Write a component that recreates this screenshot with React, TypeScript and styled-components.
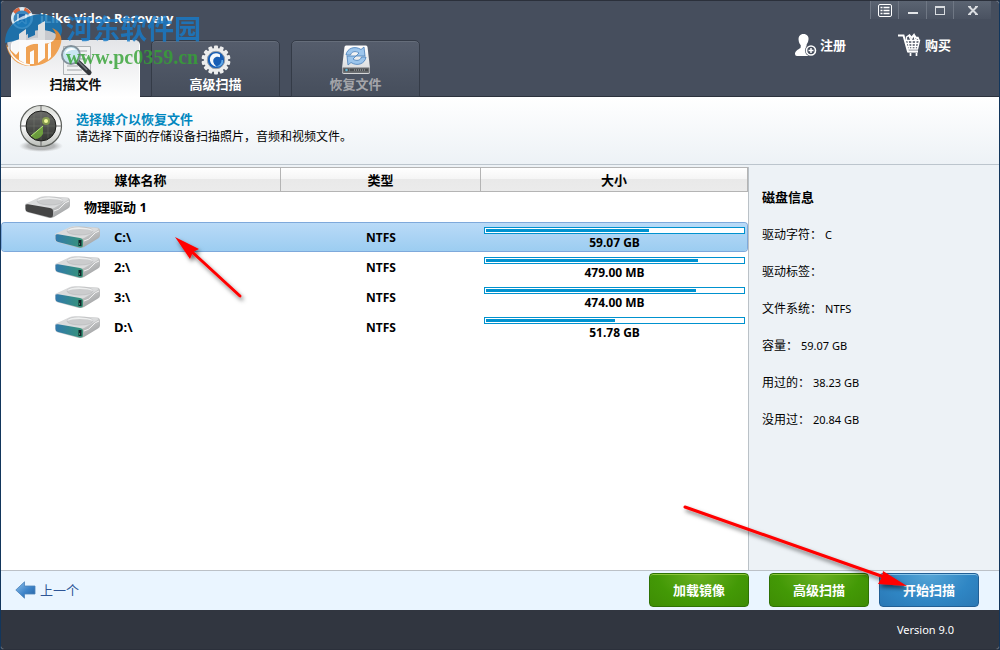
import React from "react";
import styled, { createGlobalStyle, css } from "styled-components";

const GlobalStyle = createGlobalStyle`
  * { box-sizing: border-box; }
  body {
    margin: 0;
    font-family: "Noto Sans", "Noto Sans CJK SC", sans-serif;
    font-size: 12px;
    line-height: 16px;
    color: #000;
    background: #1b2f47;
  }
  button { font: inherit; border: 0; background: none; padding: 0; cursor: pointer; }
  svg { display: block; flex: none; }
`;

const Window = styled.div`
  position: relative;
  min-height: 100vh;
  display: flex;
  flex-direction: column;
  border: 1px solid #2b303b;
  border-left-color: #12365c;
  border-right-color: #12365c;
  border-radius: 4px;
  overflow: hidden;
  background: #fff;
`;

const Header = styled.header`
  display: flex;
  justify-content: space-between;
  height: 96px;
  background: #464e5d;
  border-bottom: 1px solid #2c323d;
`;

const HeaderLeft = styled.div`
  display: flex;
  flex-direction: column;
  justify-content: space-between;
`;

const TitleRow = styled.div`
  display: flex;
  align-items: center;
  gap: 6px;
  padding: 5px 0 0 9px;
`;

const Title = styled.h1`
  margin: 0;
  font-size: 13px;
  line-height: 16px;
  font-weight: 700;
  color: #fff;
`;

const Tabs = styled.nav`
  display: flex;
  gap: 11px;
  padding-left: 10px;
  margin-bottom: -1px;
`;

const Tab = styled.button<{ $state: "active" | "normal" | "disabled" }>`
  display: flex;
  flex-direction: column;
  align-items: center;
  width: 129px;
  height: 57px;
  padding-top: 3px;
  font-size: 13px;
  line-height: 16px;
  font-weight: 700;
  border: 1px solid #343b47;
  border-radius: 5px 5px 0 0;
  color: #fff;
  background: linear-gradient(#555d6c, #464e5c);
  box-shadow: inset 0 1px 0 #656d7a;
  ${(p) =>
    p.$state === "active" &&
    css`
      color: #111;
      border-color: #e4e6e9 #fff transparent;
      border-bottom: 0;
      background: linear-gradient(#e4e5e8, #fff);
      box-shadow: none;
    `}
  ${(p) => p.$state === "disabled" && css`color: #a5a6aa;`}
`;

const HeaderRight = styled.div`
  display: flex;
  flex-direction: column;
  align-items: flex-end;
  padding-right: 8px;
`;

const Caption = styled.div`
  display: flex;
`;

const CaptionButton = styled.button<{ $w: number }>`
  display: flex;
  align-items: center;
  justify-content: center;
  width: ${(p) => p.$w}px;
  height: 18px;
  border-left: 1px solid #6f7784;
  background: linear-gradient(#5b6472, #4a5261);
`;

const HeaderLinks = styled.div`
  display: flex;
  gap: 52px;
  padding: 14px 40px 0 0;
`;

const HeaderLink = styled.a`
  display: flex;
  align-items: center;
  gap: 3px;
  color: #fff;
  font-weight: 700;
  font-size: 13px;
  line-height: 24px;
  text-decoration: none;
`;

const Intro = styled.section`
  display: flex;
  gap: 10px;
  height: 68px;
  padding: 4px 0 0 15px;
  background: linear-gradient(#fff, #edf2f6);
  border-bottom: 1px solid #bcc5cd;
`;

const IntroText = styled.div`
  padding-top: 9px;
`;

const IntroTitle = styled.h2`
  margin: 0;
  font-size: 13px;
  line-height: 18px;
  font-weight: 700;
  color: #0087bf;
`;

const IntroBody = styled.p`
  margin: 0;
  line-height: 18px;
`;

const Main = styled.main`
  flex: 1;
  display: flex;
  background: #edf2f6;
`;

const ListPane = styled.div`
  flex: 1;
  min-width: 0;
  margin-top: 2px;
  background: #fff;
  border-right: 1px solid #bac1c7;
`;

const MediaTable = styled.table`
  width: 100%;
  table-layout: fixed;
  border-collapse: separate;
  border-spacing: 0;
  font-weight: 700;
`;

const HeadCell = styled.th<{ $w?: string }>`
  width: ${(p) => p.$w || "auto"};
  height: 25px;
  padding: 0;
  font-size: 13px;
  line-height: 18px;
  border: solid #b4b4b4;
  border-width: 1px 1px 1px 0;
  background: linear-gradient(#fff 0%, #f5f5f5 48%, #e9e9e9 50%, #ebebeb 100%);
`;

const Row = styled.tr<{ $selected?: boolean }>`
  td {
    height: 30px;
    padding: 2px 0 0;
    text-align: center;
    border: solid transparent;
    border-width: 1px 0;
  }
  td:first-child { padding: 0; border-left-width: 1px; border-radius: 4px 0 0 4px; }
  td:last-child { border-right-width: 1px; border-radius: 0 4px 4px 0; }
  ${(p) =>
    p.$selected &&
    css`
      td {
        background: linear-gradient(#b9daf7, #9ccdf1);
        background-clip: padding-box;
        border-color: #7ea9db;
      }
    `}
`;

const DriveName = styled.div<{ $depth: number }>`
  display: flex;
  align-items: center;
  gap: 13px;
  padding-left: ${(p) => 21 + p.$depth * 30}px;
  font-size: 13px;
  line-height: 18px;
`;

const SizeBox = styled.div`
  padding: 2px 2px 0 3px;
`;

const Meter = styled.div`
  height: 7px;
  padding: 1px;
  border: 1px solid #0092cf;
  background: #fff;
`;

const MeterFill = styled.div`
  height: 3px;
  background: #0092cf;
`;

const SizeText = styled.div`
  line-height: 16px;
  margin-top: 1px;
  height: 16px;
`;

const InfoPane = styled.aside`
  width: 250px;
  padding: 23px 0 0 13px;
`;

const InfoTitle = styled.h2`
  margin: 0 0 20px;
  font-size: 13px;
  line-height: 18px;
`;

const InfoList = styled.dl`
  margin: 0;
  display: flex;
  flex-direction: column;
  gap: 19px;
`;

const InfoItem = styled.div`
  display: flex;
  line-height: 18px;
  gap: 3px;
  dd { margin: 0; font-size: 11px; }
`;

const ActionBar = styled.div`
  display: flex;
  align-items: center;
  height: 40px;
  padding: 0 20px 2px 14px;
  background: #eaf5ff;
  border-top: 1px solid #bcc1c7;
`;

const BackButton = styled.button`
  display: flex;
  align-items: center;
  gap: 4px;
  margin-right: auto;
  font-size: 13px;
  line-height: 18px;
  color: #2e5596;
`;

const ActionButton = styled.button<{ $blue?: boolean; $gap?: number }>`
  width: 100px;
  height: 34px;
  margin-left: ${(p) => p.$gap || 0}px;
  font-size: 13px;
  font-weight: 700;
  color: #fff;
  border: 1px solid ${(p) => (p.$blue ? "#215f95" : "#2f7204")};
  border-radius: 4px;
  background: ${(p) =>
    p.$blue
      ? "radial-gradient(ellipse at 50% 0, #55a5d6, #2f86c4 60%, #2a78b5)"
      : "radial-gradient(ellipse at 50% 0, #6bb023, #439906 60%, #3e8d04)"};
  box-shadow: inset 0 1px 0 ${(p) => (p.$blue ? "#86c3e8" : "#8cc63a")};
`;

const Footer = styled.footer`
  height: 39px;
  padding-right: 45px;
  text-align: right;
  font-size: 11px;
  line-height: 40px;
  color: #fff;
  background: #313640;
`;

const Watermark = styled.div`
  position: absolute;
  left: 3px;
  top: 10px;
  display: flex;
  gap: 2px;
  opacity: 0.82;
  pointer-events: none;
`;

const WatermarkText = styled.div`
  font-family: "Liberation Serif", "Noto Sans CJK SC", serif;
  font-weight: 700;
  padding-top: 3px;
`;

const WatermarkName = styled.div`
  font-size: 27px;
  line-height: 32px;
  color: #177bc9;
`;

const WatermarkUrl = styled.div`
  font-size: 20px;
  line-height: 22px;
  color: #36a336;
`;

const Pointer = styled.svg<{ $right?: boolean }>`
  position: absolute;
  pointer-events: none;
  ${(p) => (p.$right ? "right: 85px; bottom: 54px;" : "left: 169px; top: 230px;")}
`;

const AppLogo = () => (
  <svg width="24" height="24" viewBox="0 0 24 24">
    <circle cx="12" cy="12" r="11" fill="#dceaf3" />
    <path d="M3 5.500A11 11 0 0 1 9 1.500l2 5a6 6 0 0 0-4 3zM15 1.500a11 11 0 0 1 6 5l-5 3a6 6 0 0 0-3-3z" fill="#d8663f" />
    <circle cx="12" cy="13" r="8.500" fill="#3c87be" />
    <path d="M8 8h8v9H8z" fill="#1c5fa4" />
    <path d="M8 8v10M16 8v10M8 18l4-3 4 3" stroke="#b9dbf1" strokeWidth="1.500" fill="none" />
  </svg>
);

const ScanFileIcon = () => (
  <svg width="32" height="32" viewBox="0 0 32 32">
    <path d="M3.500 2.500h27v28h-27z" fill="#f1f2f3" stroke="#aeb2b5" />
    <path d="M18 7h9M19 11h8M19 15h8M7 22h11M7 26h15" stroke="#c9cbcd" strokeWidth="2" />
    <path d="M18.500 18.500l10.500 10" stroke="#33373c" strokeWidth="5" strokeLinecap="round" />
    <path d="M18 17l9 9" stroke="#787d82" strokeWidth="1.500" />
    <circle cx="11" cy="11" r="9" fill="#c9e6f2" stroke="#82919b" strokeWidth="2" />
    <path d="M5 10a6.500 6.500 0 0 1 11-4q-6-1-11 4z" fill="#fff" />
  </svg>
);

const GearIcon = () => (
  <svg width="32" height="32" viewBox="0 0 32 32">
    <g fill="#eceded">
      {Array.from({ length: 14 }, (_, i) => (
        <rect key={i} x="14" y="1.500" width="4" height="7" rx="1" transform={`rotate(${(i * 360) / 14} 16 16)`} />
      ))}
      <circle cx="16" cy="16" r="12" />
    </g>
    <circle cx="16" cy="16" r="8.700" fill="#175eb5" stroke="#9ca2a8" />
    <path d="M20 10.500c-5-3.500-11 .5-10 6 .5 3.500 3.500 6 6.500 6-4-3-4.500-8-.5-9.500 1.500-.6 3-.3 4 .3z" fill="#f4f9fd" />
    <path d="M21.500 16c0 4-3 6.500-6.500 6 5 2 9-1.500 8-6z" fill="#5ea7e5" />
  </svg>
);

const RecoverIcon = () => (
  <svg width="32" height="32" viewBox="0 0 32 32">
    <defs>
      <linearGradient id="driveFace" x1="0" y1="0" x2="0" y2="1">
        <stop offset="0" stopColor="#fff" />
        <stop offset="1" stopColor="#d4d6d8" />
      </linearGradient>
    </defs>
    <path d="M4.500 3Q4.700 1.500 6 1.500h20Q27.300 1.500 27.500 3L30 24v4q0 2-2 2H4q-2 0-2-2v-4z" fill="url(#driveFace)" />
    <path d="M2.500 23.500h27v4q0 1.500-1.500 1.500H4Q2.500 29 2.500 27.500z" fill="#6c6f72" />
    <path d="M4 26h5M10 26h18" stroke="#4a4d50" strokeWidth="2.500" />
    <path d="M14 26h12" stroke="#8f9396" strokeWidth="1.500" strokeDasharray="1 1" />
    <circle cx="6.500" cy="26" r="1.300" fill="#60b5d4" />
    <g fill="#9cc5ec" stroke="#477eb8" strokeWidth="0.800" strokeLinejoin="round">
      <path d="M6 11c1-7 9-9.500 15-5.500l3-2.500 1 9h-9l3-3C15.500 6.500 11.500 7.500 10.500 11z" />
      <path d="M26 13c-1 7-9 9.500-15 5.500L8 21l-1-9h9l-3 3c3.500 2.500 7.500 1.500 8.500-2z" />
    </g>
  </svg>
);

const ListIcon = () => (
  <svg width="14" height="13" viewBox="0 0 14 13">
    <rect x="0.500" y="0.500" width="13" height="12" rx="1.500" fill="none" stroke="#fff" />
    <path d="M2.500 3.500h2M2.500 6.500h2M2.500 9.500h2M5.500 3.500h6M5.500 6.500h6M5.500 9.500h6" stroke="#fff" strokeWidth="1.500" />
  </svg>
);

const MinimizeIcon = () => (
  <svg width="10" height="10" viewBox="0 0 10 10"><path d="M0 8h10" stroke="#e3e5e8" strokeWidth="2" /></svg>
);

const MaximizeIcon = () => (
  <svg width="10" height="9" viewBox="0 0 10 9">
    <path d="M0 0h10v9H0zM1 2v6h8V2z" fill="#d9dce0" fillRule="evenodd" />
  </svg>
);

const CloseIcon = () => (
  <svg width="10" height="9" viewBox="0 0 10 9">
    <path d="M1 .5l8 8M9 .5l-8 8" stroke="#d9dce0" strokeWidth="2" />
    <path d="M0 .5h3M7 .5h3M0 8.500h3M7 8.500h3" stroke="#d9dce0" />
  </svg>
);

const UserAddIcon = () => (
  <svg width="23" height="24" viewBox="0 0 23 24">
    <path d="M9.500 1c3.500 0 5.500 2.500 5 5.500-.2 2.500-1.500 4-2 5.500l.3 2.500 2 1.500v7H3q-2 0-2-2c0-3 3-4.500 5.500-6l.3-2.500c-1-1.500-2-3-2.200-5.500C4.300 3.500 6 1 9.500 1z" fill="#fff" />
    <circle cx="17" cy="17.500" r="6" fill="#464e5d" />
    <circle cx="17" cy="17.500" r="4.500" fill="none" stroke="#fff" strokeWidth="1.600" />
    <path d="M14.500 17.500h5M17 15v5" stroke="#fff" strokeWidth="1.500" />
  </svg>
);

const CartIcon = () => (
  <svg width="24" height="24" viewBox="0 0 24 24" fill="none" stroke="#fff">
    <path d="M0 2.500h5.500L10 18.500h10" strokeWidth="2" />
    <path d="M6.500 7.500h15l-2 8.500H9M7 10.500h14M8 13.500h12M10 7.500l1.500 8.500M14 7v9M18 7l-1 9" strokeWidth="1.400" />
    <path d="M8.500 7V4l3-2 2 2.500 2.500-3 2 3h2L21 7M11 3l2 4 3-5 1 5 3-2" strokeWidth="1.400" />
    <path d="M10 18.500h10M12.500 20v3M18.500 20v3" strokeWidth="1.700" />
  </svg>
);

const RadarIcon = () => (
  <svg width="50" height="52" viewBox="0 0 50 52">
    <defs>
      <radialGradient id="radarShade"><stop offset=".6" stopColor="#777" stopOpacity=".5" /><stop offset="1" stopColor="#999" stopOpacity="0" /></radialGradient>
      <linearGradient id="radarRing" x1="0" y1="0" x2="0" y2="1"><stop offset="0" stopColor="#d7d9d4" /><stop offset=".5" stopColor="#fff" /><stop offset="1" stopColor="#b9bcb7" /></linearGradient>
      <linearGradient id="radarFace" x1="0" y1="0" x2="0" y2="1"><stop offset="0" stopColor="#6b6c69" /><stop offset="1" stopColor="#333532" /></linearGradient>
    </defs>
    <ellipse cx="25" cy="45" rx="22" ry="6" fill="url(#radarShade)" />
    <circle cx="25" cy="25" r="20.500" fill="url(#radarRing)" stroke="#5d605c" strokeWidth="1.200" />
    <circle cx="25" cy="25" r="15" fill="url(#radarFace)" stroke="#1c1d1b" />
    <path d="M25 4v6M25 40v6M4 25h6M40 25h6" stroke="#666" />
    <path d="M25 11v28M11 25h28M18 13v24M32 13v24M13 18h24M13 32h24" stroke="#8a8d84" strokeOpacity=".45" strokeWidth=".7" />
    <path d="M15 35L27 25v8q-3 5-8 5z" fill="#78b83b" fillOpacity=".75" />
    <path d="M15 35L27 25" stroke="#b5e878" />
    <circle cx="30" cy="20" r="4" fill="#9fc04a" fillOpacity=".6" />
    <circle cx="30" cy="20" r="2" fill="#f3f999" />
  </svg>
);

const DriveIcon = ({ dark }: { dark?: boolean }) => (
  <svg width="48" height="26" viewBox="0 0 48 26">
    <defs>
      <linearGradient id="driveTop" x1="0" y1="0" x2="1" y2="1"><stop offset="0" stopColor="#e2e3e3" /><stop offset=".5" stopColor="#c9cacb" /><stop offset="1" stopColor="#929495" /></linearGradient>
      <linearGradient id="driveFront"><stop offset="0" stopColor="#3179ac" /><stop offset="1" stopColor="#389577" /></linearGradient>
    </defs>
    <path d="M2 10L17 3q2-1 5-.8L44 3.500q3 .3 3 3v5q0 2-2 3L31 23q-2 1.300-5 1L5 18.500q-3-.8-3-3.500z" fill="url(#driveTop)" />
    <path d="M3 10L18 3.500q2-1 5-.8l20 1.200q4 .3 1 2.500L31 14q-2 1-5 .7z" fill="#dadbdc" />
    <ellipse cx="27" cy="7" rx="13" ry="4" fill="#cbcccd" stroke="#b5b7b8" strokeWidth=".6" />
    <path d="M14 7q2-4 14-3.600Q40 4 40 7q-4-2-13-2t-13 2z" fill="#eeefef" />
    <path d="M31 17q5-1 8-5t7-5" stroke="#f2f2f2" fill="none" />
    <path d="M2.500 11Q3 10 5 10.300L27 14q3 .5 3 3v4q0 3-3 2.500L5 18q-2.500-.7-2.500-3z" fill={dark ? "#454545" : "url(#driveFront)"} />
    {!dark && <path d="M25.500 16h3v6h-3z" fill="#122328" />}
    {!dark && <path d="M26 20h1" stroke="#64e59b" />}
  </svg>
);

const BackIcon = () => (
  <svg width="21" height="18" viewBox="0 0 21 18">
    <defs>
      <linearGradient id="backFill" x1="0" y1="0" x2="1" y2="1"><stop offset="0" stopColor="#91c3ec" /><stop offset=".55" stopColor="#3e84c9" /><stop offset="1" stopColor="#245f9e" /></linearGradient>
    </defs>
    <path d="M.8 9L9.500.8V5H20v8H9.500v4.200z" fill="url(#backFill)" stroke="#4d83ba" strokeWidth=".8" />
  </svg>
);

const SiteLogo = () => (
  <svg width="60" height="58" viewBox="0 0 60 58">
    <circle cx="29" cy="29" r="26" fill="#fff" fillOpacity=".85" />
    <path d="M1 32C1 19 8 10 20 8c10-6 24-7 34 1 5 5 5 12 2 17-7-6-13-7-20-7-12 0-18 11-31 12z" fill="#1678ba" />
    <path d="M2 33c2 14 12 22 24 22 14 0 27-7 31-23 2-7-3-13-9-15 4 4 5 9 2 12-5 6-16 2-25 4-5 1-10 7-13 11-4-3-7-7-10-11z" fill="#f19232" />
    <path d="M4 36c3 10 11 17 22 18" fill="none" stroke="#fff" strokeWidth="1.500" />
    <g fill="#fff">
      <path d="M15 23l7-5v35l-7-4zM34 14l7-4v37l-7 5z" />
      <path d="M21 31q8-5 14-4v6q-7-1-14 4z" />
      <path d="M26 41l4-2v14h-4zM44 33l3-2v15l-3 3z" />
    </g>
    <path d="M24 16l7-4v12l-7 3z" fill="#1678ba" />
  </svg>
);

const Shadow = ({ id }: { id: string }) => (
  <filter id={id} x="-20%" y="-20%" width="150%" height="150%">
    <feDropShadow dx="2" dy="3" stdDeviation="2" floodColor="#000" floodOpacity=".55" />
  </filter>
);

const drives = [
  { name: "C:\\", type: "NTFS", size: "59.07 GB", used: 63.5, selected: true },
  { name: "2:\\", type: "NTFS", size: "479.00 MB", used: 82.5 },
  { name: "3:\\", type: "NTFS", size: "474.00 MB", used: 81.7 },
  { name: "D:\\", type: "NTFS", size: "51.78 GB", used: 50.2 },
];

const info = [
  ["驱动字符：", "C"],
  ["驱动标签：", ""],
  ["文件系统：", "NTFS"],
  ["容量：", "59.07 GB"],
  ["用过的：", "38.23 GB"],
  ["没用过：", "20.84 GB"],
];

export default function App() {
  return (
    <>
      <GlobalStyle />
      <Window>
        <Header>
          <HeaderLeft>
            <TitleRow>
              <AppLogo />
              <Title>iLike Video Recovery</Title>
            </TitleRow>
            <Tabs>
              <Tab $state="active"><ScanFileIcon />扫描文件</Tab>
              <Tab $state="normal"><GearIcon />高级扫描</Tab>
              <Tab $state="disabled"><RecoverIcon />恢复文件</Tab>
            </Tabs>
          </HeaderLeft>
          <HeaderRight>
            <Caption>
              <CaptionButton $w={28} aria-label="菜单"><ListIcon /></CaptionButton>
              <CaptionButton $w={28} aria-label="最小化"><MinimizeIcon /></CaptionButton>
              <CaptionButton $w={27} aria-label="最大化"><MaximizeIcon /></CaptionButton>
              <CaptionButton $w={38} aria-label="关闭"><CloseIcon /></CaptionButton>
            </Caption>
            <HeaderLinks>
              <HeaderLink href="#register"><UserAddIcon />注册</HeaderLink>
              <HeaderLink href="#buy"><CartIcon />购买</HeaderLink>
            </HeaderLinks>
          </HeaderRight>
        </Header>

        <Intro>
          <RadarIcon />
          <IntroText>
            <IntroTitle>选择媒介以恢复文件</IntroTitle>
            <IntroBody>请选择下面的存储设备扫描照片，音频和视频文件。</IntroBody>
          </IntroText>
        </Intro>

        <Main>
          <ListPane>
            <MediaTable>
              <thead>
                <tr>
                  <HeadCell $w="280px">媒体名称</HeadCell>
                  <HeadCell $w="200px">类型</HeadCell>
                  <HeadCell>大小</HeadCell>
                </tr>
              </thead>
              <tbody>
                <Row>
                  <td><DriveName $depth={0}><DriveIcon dark />物理驱动 1</DriveName></td>
                  <td />
                  <td />
                </Row>
                {drives.map((d) => (
                  <Row key={d.name} $selected={d.selected}>
                    <td><DriveName $depth={1}><DriveIcon />{d.name}</DriveName></td>
                    <td>{d.type}</td>
                    <td>
                      <SizeBox>
                        <Meter><MeterFill style={{ width: `${d.used}%` }} /></Meter>
                        <SizeText>{d.size}</SizeText>
                      </SizeBox>
                    </td>
                  </Row>
                ))}
              </tbody>
            </MediaTable>
          </ListPane>
          <InfoPane>
            <InfoTitle>磁盘信息</InfoTitle>
            <InfoList>
              {info.map(([label, value]) => (
                <InfoItem key={label}><dt>{label}</dt><dd>{value}</dd></InfoItem>
              ))}
            </InfoList>
          </InfoPane>
        </Main>

        <ActionBar>
          <BackButton><BackIcon />上一个</BackButton>
          <ActionButton>加载镜像</ActionButton>
          <ActionButton $gap={20}>高级扫描</ActionButton>
          <ActionButton $blue $gap={10}>开始扫描</ActionButton>
        </ActionBar>
        <Footer>Version 9.0</Footer>

        <Pointer width="80" height="76" viewBox="0 0 80 76">
          <defs><Shadow id="shadowA" /></defs>
          <g filter="url(#shadowA)" fill="#f00">
            <path d="M20 19L70 65" stroke="#f00" strokeWidth="3" strokeLinecap="round" />
            <path d="M5 6L29 18 23 21 20 28z" />
          </g>
        </Pointer>
        <Pointer $right width="240" height="100" viewBox="0 0 240 100">
          <defs><Shadow id="shadowB" /></defs>
          <g filter="url(#shadowB)" fill="#f00">
            <path d="M11 12L210 82" stroke="#f00" strokeWidth="3" strokeLinecap="round" />
            <path d="M233 91L204 89 208 82 209 76z" />
          </g>
        </Pointer>
        <Watermark>
          <SiteLogo />
          <WatermarkText>
            <WatermarkName>河东软件园</WatermarkName>
            <WatermarkUrl>www.pc0359.cn</WatermarkUrl>
          </WatermarkText>
        </Watermark>
      </Window>
    </>
  );
}
